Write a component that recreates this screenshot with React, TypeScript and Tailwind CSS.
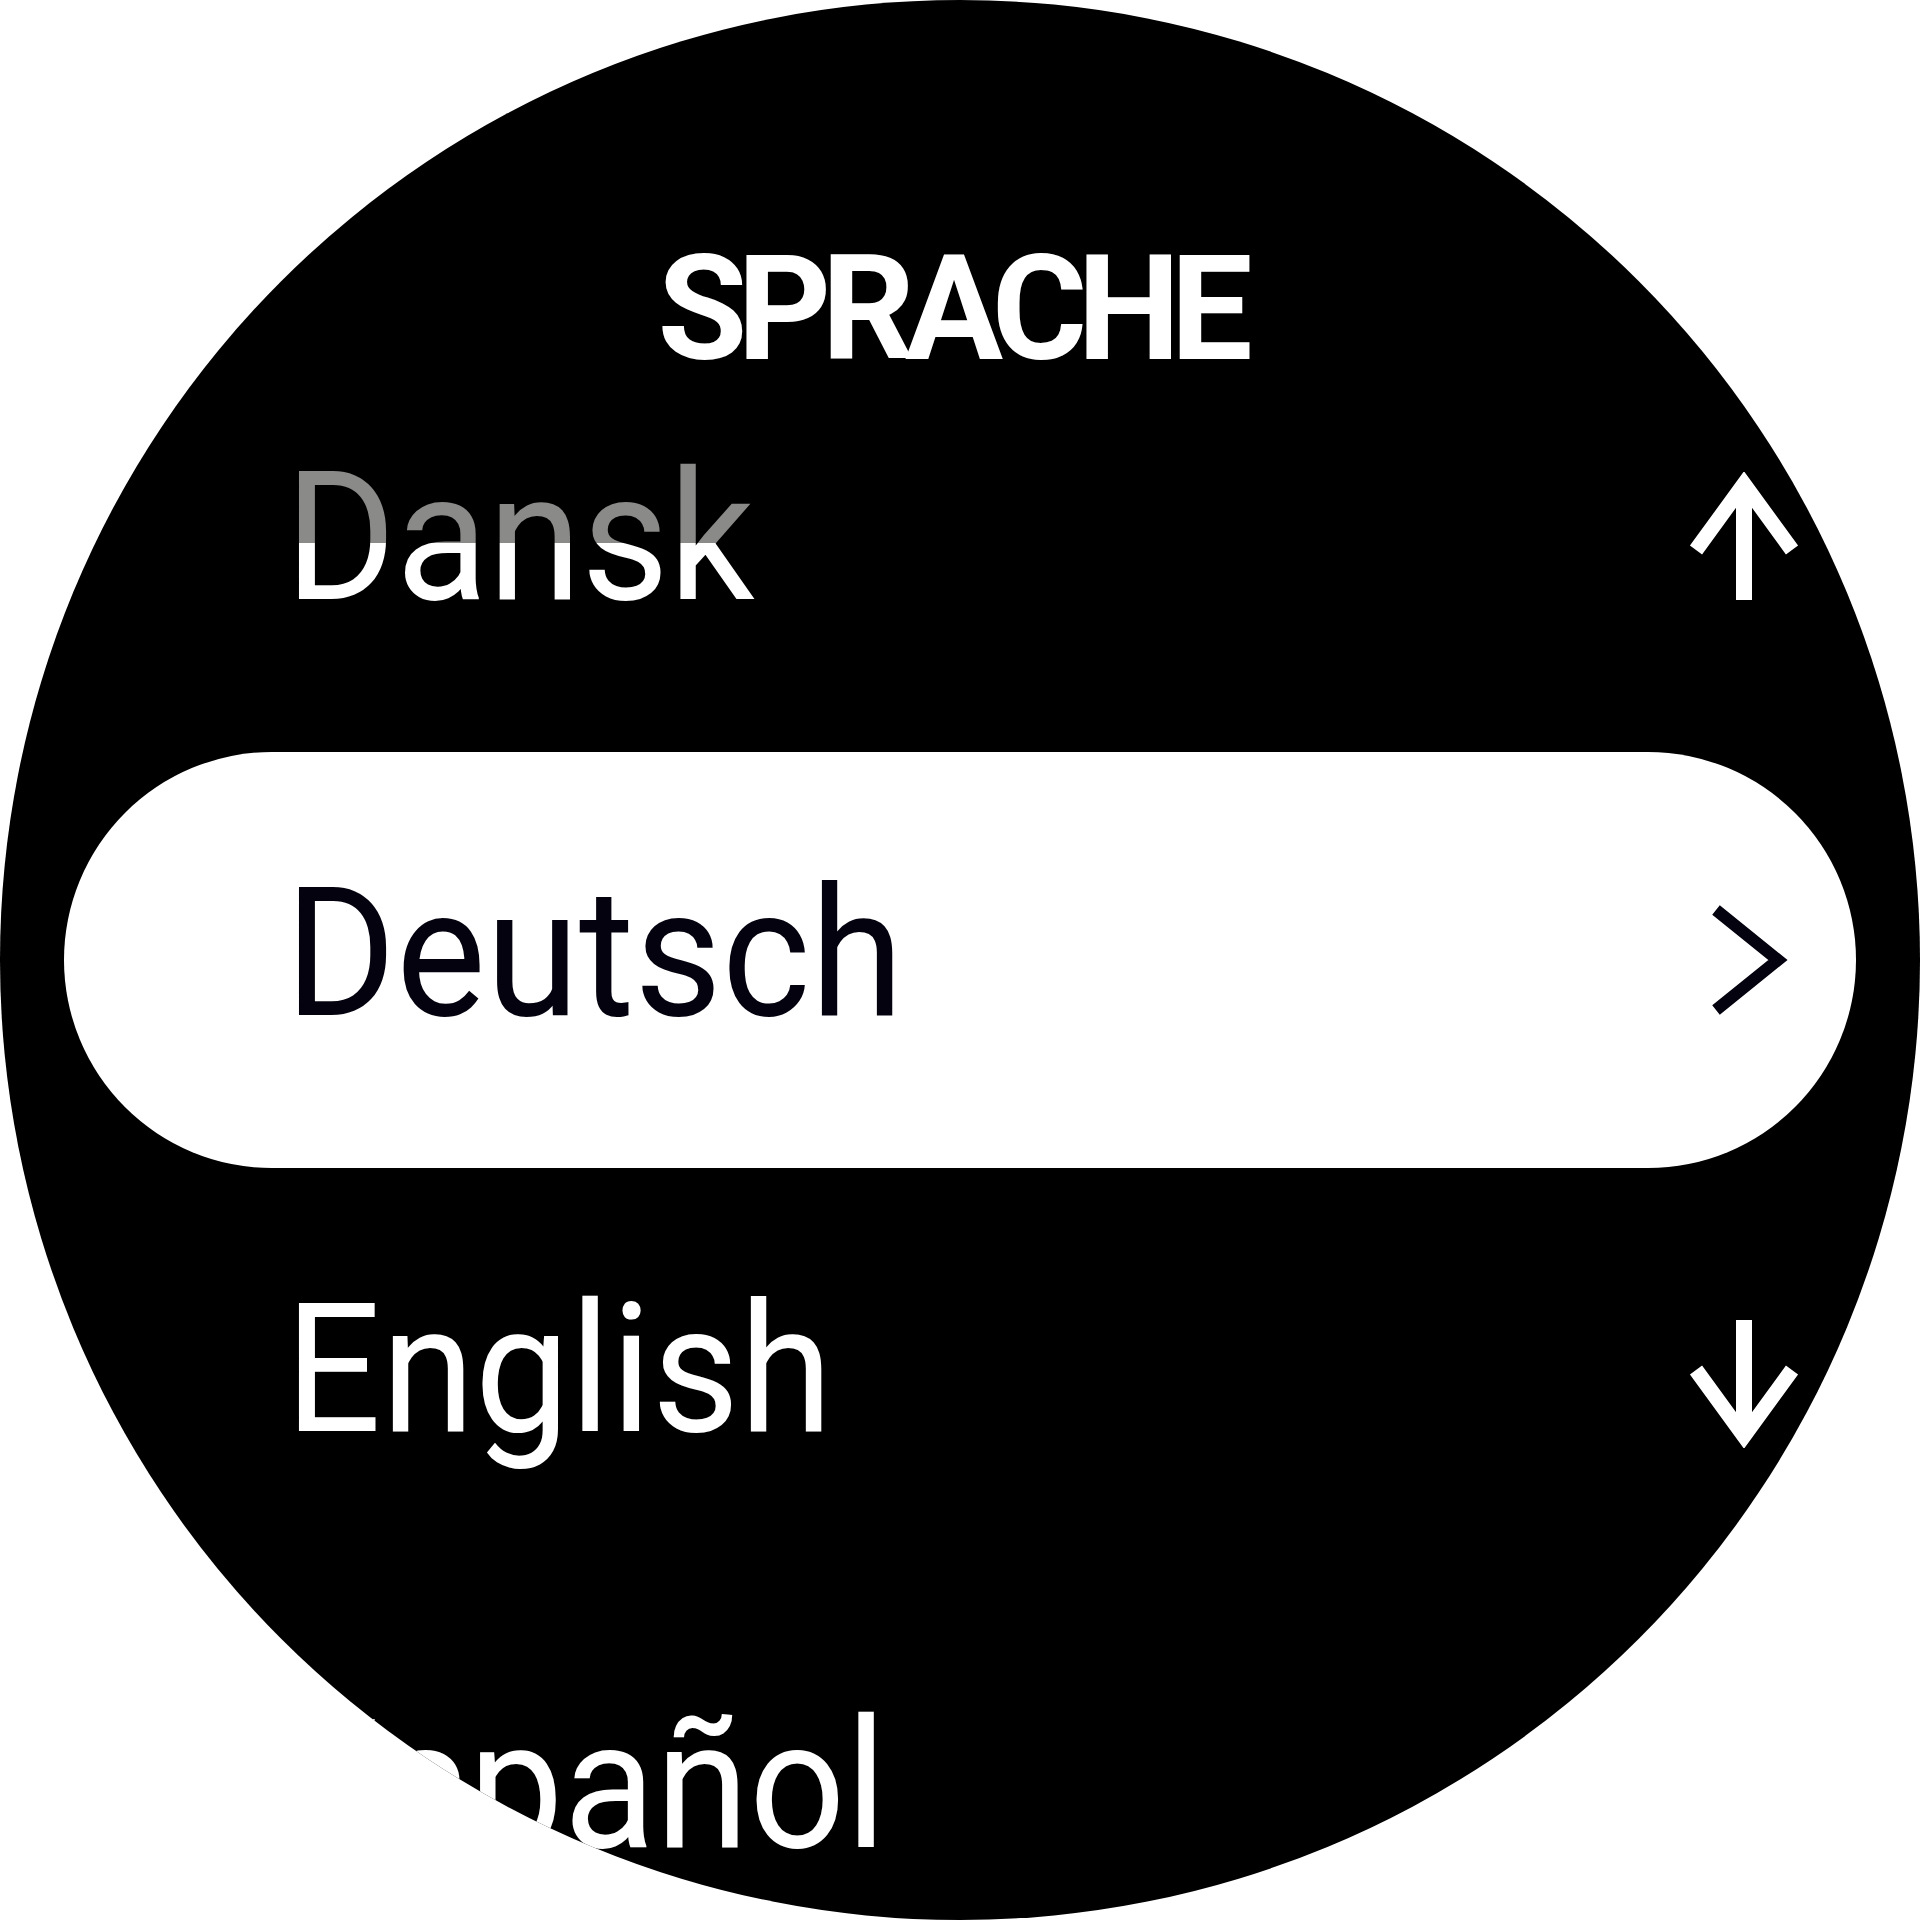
import React from "react";

function UpArrow() {
  return (
    <svg width="112" height="128" viewBox="0 0 112 128" fill="none">
      <path d="M56 16 V128" stroke="#fff" strokeWidth="16" />
      <path d="M8 78 L56 12 L104 78" stroke="#fff" strokeWidth="15" strokeLinejoin="miter" />
    </svg>
  );
}

function DownArrow() {
  return (
    <svg width="112" height="128" viewBox="0 0 112 128" fill="none">
      <path d="M56 0 V112" stroke="#fff" strokeWidth="16" />
      <path d="M8 50 L56 116 L104 50" stroke="#fff" strokeWidth="15" strokeLinejoin="miter" />
    </svg>
  );
}

function Chevron() {
  return (
    <svg width="112" height="112" viewBox="0 0 112 112" fill="none">
      <path d="M28 6 L90 56 L28 106" stroke="#03020e" strokeWidth="12" strokeLinejoin="miter" />
    </svg>
  );
}

type RowProps = {
  label: string;
  selected?: boolean;
  faded?: boolean;
  icon?: "up" | "down" | "chevron";
};

function Row({ label, selected, faded, icon }: RowProps) {
  const textBase =
    "inline-block origin-left scale-x-[0.94] font-['Roboto',_'Liberation_Sans',_sans-serif] font-normal text-[180px] leading-none whitespace-nowrap";
  let textClass = textBase + " text-white";
  if (selected) textClass = textBase + " text-[#03020e]";
  if (faded)
    textClass =
      textBase +
      " bg-[linear-gradient(to_bottom,#8a8b88_95px,#ffffff_95px)] bg-clip-text text-transparent";
  return (
    <div
      className={
        "mx-[64px] h-[416px] w-[1792px] shrink-0 flex items-start justify-between pl-[221px] pr-[56px] " +
        (selected ? "bg-white rounded-full" : "")
      }
    >
      <div className="pt-[112px]">
        <span className={textClass}>{label}</span>
      </div>
      <div
        className={
          "self-center flex items-center justify-center " +
          (icon === "up" ? "mt-[-16px]" : icon === "down" ? "mt-[16px]" : "")
        }
      >
        {icon === "up" && <UpArrow />}
        {icon === "down" && <DownArrow />}
        {icon === "chevron" && <Chevron />}
      </div>
    </div>
  );
}

export default function App() {
  return (
    <div className="w-[1920px] h-[1920px] bg-white">
      <div className="w-[1920px] h-[1920px] rounded-full bg-black overflow-hidden flex flex-col">
        <div className="h-[336px] shrink-0 pt-[237px] flex justify-center">
          <span className="mr-[20px] font-['Roboto',_'Liberation_Sans',_sans-serif] font-bold text-[146px] leading-none tracking-[-10px] text-white whitespace-nowrap">
            SPRACHE
          </span>
        </div>
        <Row label="Dansk" faded icon="up" />
        <Row label="Deutsch" selected icon="chevron" />
        <Row label="English" icon="down" />
        <Row label="Español" />
      </div>
    </div>
  );
}
